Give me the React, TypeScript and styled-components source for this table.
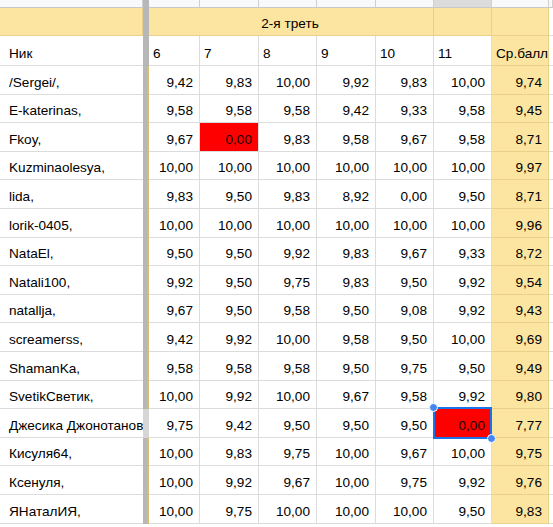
import React from 'react';
import styled, { createGlobalStyle, css } from 'styled-components';

const GlobalStyle = createGlobalStyle`
  html, body { margin: 0; padding: 0; background: #fff; overflow: hidden; }
  body { font-family: "Liberation Sans", Arial, sans-serif; }
`;

const COLS = '143px 6px 51px 59px 58px 59px 58px 58px 57px 1fr';
const GRID = '#dcdcdc';
const YELLOW = '#fce5a0';
const RED = '#ff0000';

const Sheet = styled.div`
  width: 553px;
  height: 527px;
  overflow: hidden;
  display: flex;
  flex-direction: column;
  font-family: "Liberation Sans", Arial, sans-serif;
  font-size: 13.6px;
  color: #000;
`;

const Row = styled.div<{ $h: number }>`
  display: grid;
  grid-template-columns: ${COLS};
  height: ${(p) => p.$h}px;
  flex: none;
`;

const ColHead = styled.div<{ $active?: boolean }>`
  box-sizing: border-box;
  background: ${(p) => (p.$active ? '#dcdcdc' : '#f8f9fa')};
  border-right: 1px solid #d0d0d0;
  border-bottom: 1px solid #c8c8c8;
`;

const Divider = styled.div<{ $kind: 'plain' | 'data' | 'selected' }>`
  box-sizing: border-box;
  background: ${(p) => (p.$kind === 'selected' ? '#d6d6d6' : '#b7b7b7')};
  ${(p) =>
    p.$kind === 'data' &&
    css`
      border-right: 2px solid #d8bd6c;
    `}
`;

const BaseCell = styled.div`
  position: relative;
  box-sizing: border-box;
  display: flex;
  align-items: flex-end;
  padding: 0 6px 3px 4px;
  border-right: 1px solid ${GRID};
  border-bottom: 1px solid ${GRID};
  background: #fff;
  white-space: nowrap;
  overflow: hidden;
  line-height: 16px;
`;

const BandCell = styled(BaseCell)<{ $span?: number; $center?: boolean }>`
  background: ${YELLOW};
  border-right-color: rgba(150, 120, 40, 0.18);
  border-bottom-color: rgba(150, 120, 40, 0.18);
  justify-content: ${(p) => (p.$center ? 'center' : 'flex-start')};
  ${(p) =>
    p.$span &&
    css`
      grid-column: span ${p.$span};
    `}
`;

const NameCell = styled(BaseCell)`
  padding-left: 9px;
  border-right: none;
`;

const HeadCell = styled(BaseCell)<{ $avg?: boolean }>`
  justify-content: flex-start;
  ${(p) =>
    p.$avg &&
    css`
      background: ${YELLOW};
      border-right-color: rgba(150, 120, 40, 0.18);
      border-bottom-color: rgba(150, 120, 40, 0.18);
    `}
`;

const BlankCell = styled(BaseCell)``;

const NumCell = styled(BaseCell)<{ $tone?: 'plain' | 'red' | 'avg'; $selected?: boolean }>`
  justify-content: flex-end;
  ${(p) =>
    p.$tone === 'red' &&
    css`
      background: ${RED};
      color: #1a0000;
    `}
  ${(p) =>
    p.$tone === 'avg' &&
    css`
      background: ${YELLOW};
      border-right-color: rgba(150, 120, 40, 0.18);
      border-bottom-color: rgba(150, 120, 40, 0.18);
    `}
  ${(p) =>
    p.$selected &&
    css`
      overflow: visible;
      z-index: 3;
    `}
`;

const Selection = styled.div`
  position: absolute;
  left: -1px;
  top: -2px;
  right: -1px;
  bottom: -2px;
  border: 2px solid #1a73e8;
  pointer-events: none;
`;

const Handle = styled.span<{ $corner: 'tl' | 'br' }>`
  position: absolute;
  width: 7px;
  height: 7px;
  border-radius: 50%;
  background: #4285f4;
  border: 1px solid #fff;
  ${(p) =>
    p.$corner === 'tl'
      ? css`
          left: -6px;
          top: -6px;
        `
      : css`
          right: -6px;
          bottom: -6px;
        `}
`;

type Entry = { name: string; vals: string[]; avg: string; red?: number[]; selected?: number };

const rows: Entry[] = [
  { name: '/Sergei/,', vals: ['9,42', '9,83', '10,00', '9,92', '9,83', '10,00'], avg: '9,74' },
  { name: 'E-katerinas,', vals: ['9,58', '9,58', '9,58', '9,42', '9,33', '9,58'], avg: '9,45' },
  { name: 'Fkoy,', vals: ['9,67', '0,00', '9,83', '9,58', '9,67', '9,58'], avg: '8,71', red: [1] },
  { name: 'Kuzminaolesya,', vals: ['10,00', '10,00', '10,00', '10,00', '10,00', '10,00'], avg: '9,97' },
  { name: 'lida,', vals: ['9,83', '9,50', '9,83', '8,92', '0,00', '9,50'], avg: '8,71' },
  { name: 'lorik-0405,', vals: ['10,00', '10,00', '10,00', '10,00', '10,00', '10,00'], avg: '9,96' },
  { name: 'NataEl,', vals: ['9,50', '9,50', '9,92', '9,83', '9,67', '9,33'], avg: '8,72' },
  { name: 'Natali100,', vals: ['9,92', '9,50', '9,75', '9,83', '9,50', '9,92'], avg: '9,54' },
  { name: 'natallja,', vals: ['9,67', '9,50', '9,58', '9,50', '9,08', '9,92'], avg: '9,43' },
  { name: 'screamerss,', vals: ['9,42', '9,92', '10,00', '9,58', '9,50', '10,00'], avg: '9,69' },
  { name: 'ShamanKa,', vals: ['9,58', '9,58', '9,58', '9,50', '9,75', '9,50'], avg: '9,49' },
  { name: 'SvetikСветик,', vals: ['10,00', '9,92', '10,00', '9,67', '9,58', '9,92'], avg: '9,80' },
  {
    name: 'Джесика Джонотанова,',
    vals: ['9,75', '9,42', '9,50', '9,50', '9,50', '0,00'],
    avg: '7,77',
    red: [5],
    selected: 5,
  },
  { name: 'Кисуля64,', vals: ['10,00', '9,83', '9,75', '10,00', '9,67', '10,00'], avg: '9,75' },
  { name: 'Ксенуля,', vals: ['10,00', '9,92', '9,67', '10,00', '9,75', '9,92'], avg: '9,76' },
  { name: 'ЯНаталИЯ,', vals: ['10,00', '9,75', '10,00', '10,00', '10,00', '9,50'], avg: '9,83' },
];

const headers = ['6', '7', '8', '9', '10', '11'];

export default function App() {
  return (
    <>
      <GlobalStyle />
      <Sheet>
        <Row $h={8}>
          <ColHead />
          <Divider $kind="plain" />
          {[0, 1, 2, 3, 4].map((i) => (
            <ColHead key={i} />
          ))}
          <ColHead $active />
          <ColHead />
          <ColHead />
        </Row>
        <Row $h={28}>
          <BandCell />
          <Divider $kind="plain" />
          <BandCell $span={5} $center>
            2-я треть
          </BandCell>
          <BandCell />
          <BandCell />
          <BlankCell />
        </Row>
        <Row $h={30}>
          <NameCell>Ник</NameCell>
          <Divider $kind="plain" />
          {headers.map((h) => (
            <HeadCell key={h}>{h}</HeadCell>
          ))}
          <HeadCell $avg>Ср.балл</HeadCell>
          <BlankCell />
        </Row>
        {rows.map((r) => {
          const isSel = r.selected !== undefined;
          return (
            <Row $h={28.6} key={r.name}>
              <NameCell>{r.name}</NameCell>
              <Divider $kind={isSel ? 'selected' : 'data'} />
              {r.vals.map((v, i) => (
                <NumCell
                  key={i}
                  $tone={r.red?.includes(i) ? 'red' : 'plain'}
                  $selected={r.selected === i}
                >
                  {v}
                  {r.selected === i && (
                    <Selection>
                      <Handle $corner="tl" />
                      <Handle $corner="br" />
                    </Selection>
                  )}
                </NumCell>
              ))}
              <NumCell $tone="avg">{r.avg}</NumCell>
              <BlankCell />
            </Row>
          );
        })}
      </Sheet>
    </>
  );
}
